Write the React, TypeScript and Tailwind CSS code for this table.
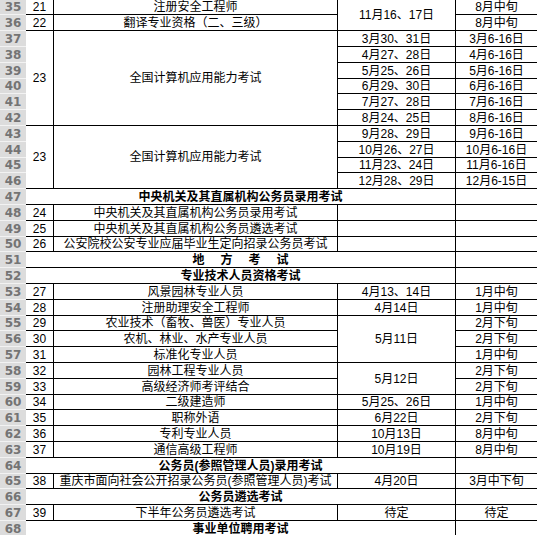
import React from "react";

const R = [
  "",
  "row-[1]", "row-[2]", "row-[3]", "row-[4]", "row-[5]", "row-[6]", "row-[7]", "row-[8]", "row-[9]", "row-[10]",
  "row-[11]", "row-[12]", "row-[13]", "row-[14]", "row-[15]", "row-[16]", "row-[17]", "row-[18]", "row-[19]", "row-[20]",
  "row-[21]", "row-[22]", "row-[23]", "row-[24]", "row-[25]", "row-[26]", "row-[27]", "row-[28]", "row-[29]", "row-[30]",
  "row-[31]", "row-[32]", "row-[33]", "row-[34]",
];
const C = ["", "col-[1]", "col-[2]", "col-[3]", "col-[4]"];

type Cell = { pos: string; t?: React.ReactNode; b?: boolean };

const simple: [number, string, string, string | null, string][] = [
  [1, "21", "注册安全工程师", null, "8月中旬"],
  [2, "22", "翻译专业资格（二、三级）", null, "8月中旬"],
  [14, "24", "中央机关及其直属机构公务员录用考试", "", ""],
  [15, "25", "中央机关及其直属机构公务员遴选考试", "", ""],
  [16, "26", "公安院校公安专业应届毕业生定向招录公务员考试", "", ""],
  [19, "27", "风景园林专业人员", "4月13、14日", "1月中旬"],
  [20, "28", "注册助理安全工程师", "4月14日", "1月中旬"],
  [21, "29", "农业技术（畜牧、兽医）专业人员", null, "2月下旬"],
  [22, "30", "农机、林业、水产专业人员", null, "2月下旬"],
  [23, "31", "标准化专业人员", null, "1月中旬"],
  [24, "32", "园林工程专业人员", null, "2月下旬"],
  [25, "33", "高级经济师考评结合", null, "2月下旬"],
  [26, "34", "二级建造师", "5月25、26日", "1月中旬"],
  [27, "35", "职称外语", "6月22日", "2月下旬"],
  [28, "36", "专利专业人员", "10月13日", "8月中旬"],
  [29, "37", "通信高级工程师", "10月19日", "8月中旬"],
  [31, "38", "重庆市面向社会公开招录公务员(参照管理人员)考试", "4月20日", "3月中下旬"],
  [33, "39", "下半年公务员遴选考试", "待定", "待定"],
];

const computer: [number, string, string][] = [
  [3, "3月30、31日", "3月6-16日"],
  [4, "4月27、28日", "4月6-16日"],
  [5, "5月25、26日", "5月6-16日"],
  [6, "6月29、30日", "6月6-16日"],
  [7, "7月27、28日", "7月6-16日"],
  [8, "8月24、25日", "8月6-16日"],
  [9, "9月28、29日", "9月6-16日"],
  [10, "10月26、27日", "10月6-16日"],
  [11, "11月23、24日", "11月6-16日"],
  [12, "12月28、29日", "12月6-15日"],
];

const sections: [number, React.ReactNode][] = [
  [13, "中央机关及其直属机构公务员录用考试"],
  [
    17,
    <span className="flex gap-[16px]">
      <span>地</span>
      <span>方</span>
      <span>考</span>
      <span>试</span>
    </span>,
  ],
  [18, "专业技术人员资格考试"],
  [30, "公务员(参照管理人员)录用考试"],
  [32, "公务员遴选考试"],
  [34, "事业单位聘用考试"],
];

const cells: Cell[] = [];
for (const [r, b, c, d, e] of simple) {
  cells.push({ pos: `${R[r]} ${C[1]}`, t: b });
  cells.push({ pos: `${R[r]} ${C[2]}`, t: c });
  if (d !== null) cells.push({ pos: `${R[r]} ${C[3]}`, t: d });
  cells.push({ pos: `${R[r]} ${C[4]}`, t: e });
}
cells.push({ pos: "row-[1/span_2] col-[3]", t: "11月16、17日" });
cells.push({ pos: "row-[21/span_3] col-[3]", t: "5月11日" });
cells.push({ pos: "row-[24/span_2] col-[3]", t: "5月12日" });
cells.push({ pos: "row-[3/span_6] col-[1]", t: "23" });
cells.push({ pos: "row-[3/span_6] col-[2]", t: "全国计算机应用能力考试" });
cells.push({ pos: "row-[9/span_4] col-[1]", t: "23" });
cells.push({ pos: "row-[9/span_4] col-[2]", t: "全国计算机应用能力考试" });
for (const [r, d, e] of computer) {
  cells.push({ pos: `${R[r]} ${C[3]}`, t: d });
  cells.push({ pos: `${R[r]} ${C[4]}`, t: e });
}
for (const [r, t] of sections) {
  cells.push({ pos: `${R[r]} col-[1/span_3]`, t, b: true });
  cells.push({ pos: `${R[r]} ${C[4]}`, t: "" });
}

const rowNums = Array.from({ length: 34 }, (_, i) => 35 + i);

export default function App() {
  return (
    <div className="flex w-[537px] h-[535px] overflow-hidden bg-white">
      <div className="flex flex-col w-[26px] shrink-0">
        {rowNums.map((n, i) => (
          <div
            key={n}
            className={`${i % 5 === 0 ? "h-[15px]" : "h-[16px]"} shrink-0 flex items-center justify-center bg-[#dcdcdc] border-b border-[#f2f2f2] font-['DejaVu_Sans',sans-serif] font-bold text-[12px] leading-none text-[#747474]`}
          >
            {n}
          </div>
        ))}
      </div>
      <div className="grid shrink-0 grid-cols-[28px_284px_118px_82px] grid-rows-[repeat(7,15px_16px_16px_16px_16px)] font-['Liberation_Sans','Noto_Sans_CJK_SC',sans-serif] text-[12px] leading-none text-black">
        {cells.map((c, i) => (
          <div
            key={i}
            className={`${c.pos} flex items-center justify-center whitespace-nowrap overflow-hidden border-b border-r border-black ${c.b ? "font-bold" : ""}`}
          >
            {c.t}
          </div>
        ))}
      </div>
    </div>
  );
}
